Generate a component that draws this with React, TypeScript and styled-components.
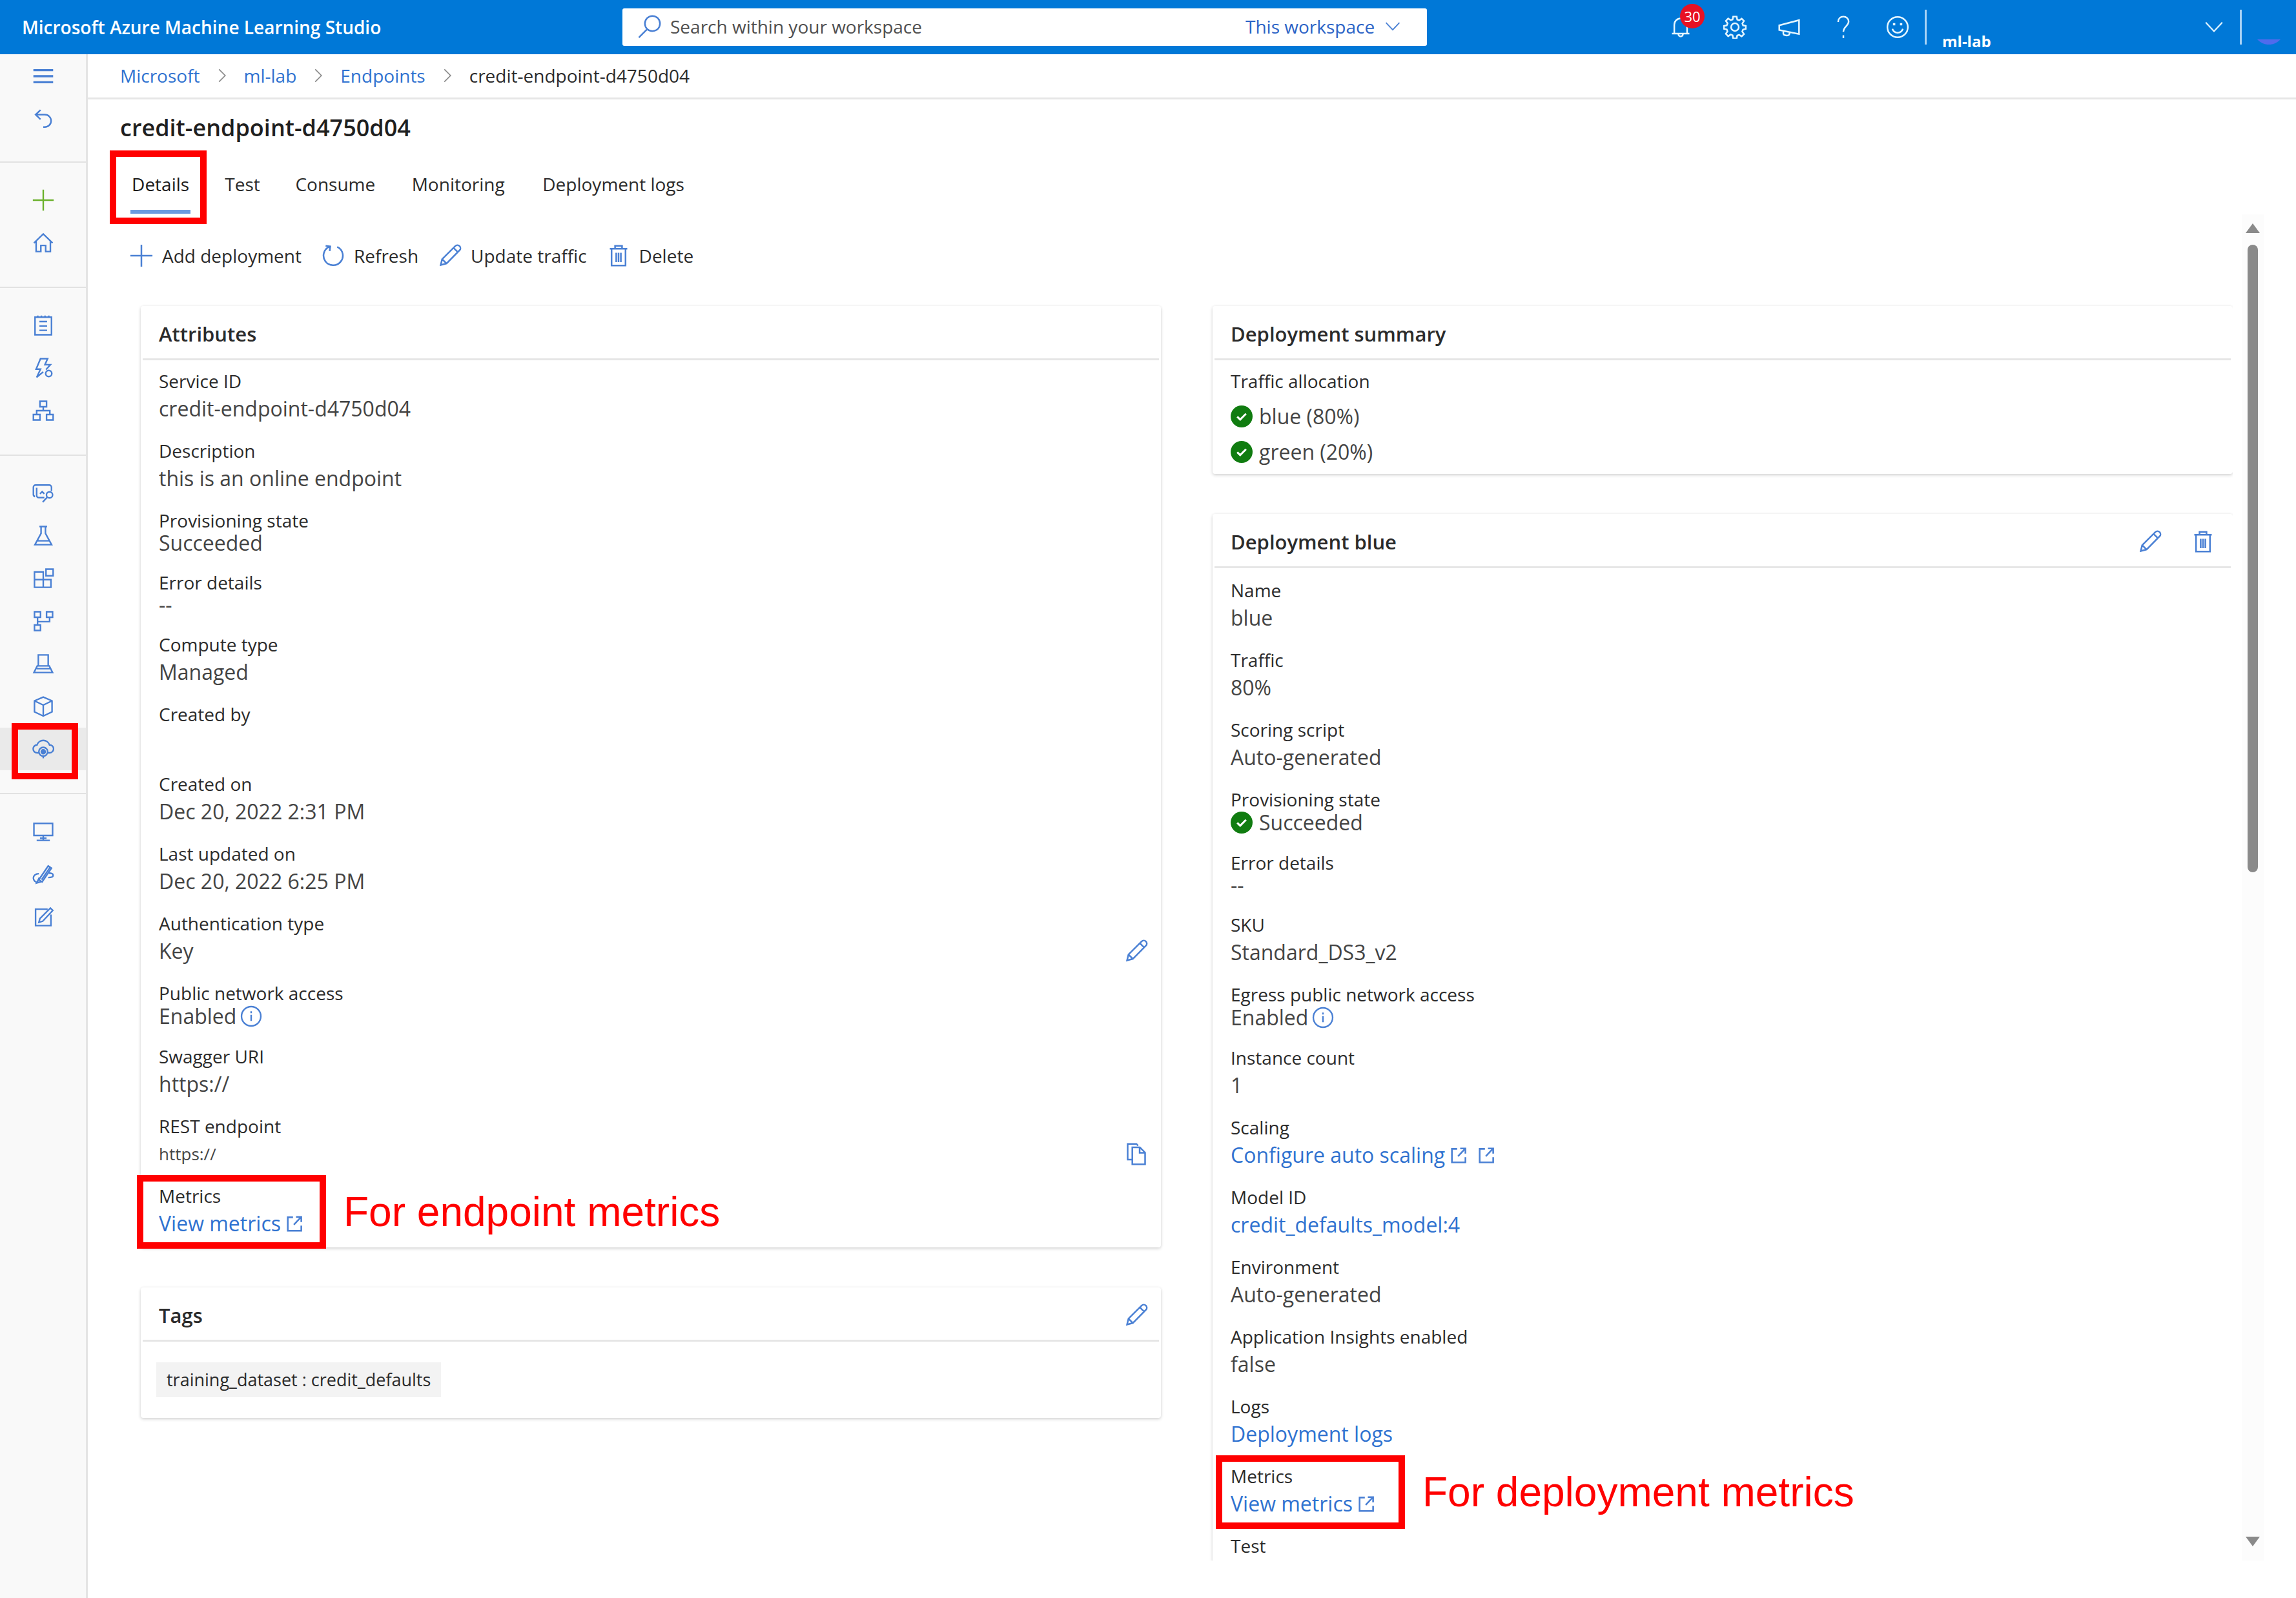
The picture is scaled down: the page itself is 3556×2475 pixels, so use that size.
import React from "react";
import styled, { createGlobalStyle, css } from "styled-components";

const color = {
  brand: "#0078d7",
  link: "#2f72d0",
  icon: "#4a80d4",
  text: "#2b2b2b",
  value: "#444444",
  line: "#e6e6e6",
  mark: "#ff0000",
};

const GlobalStyle = createGlobalStyle`
  *, *::before, *::after { box-sizing: border-box; }
  body {
    margin: 0;
    background: #fff;
    color: ${color.text};
    font-family: "Open Sans", "Noto Sans", sans-serif;
    font-size: 28px;
    line-height: 38px;
  }
  h1, h2, dl, dd, ul, ol, p { margin: 0; padding: 0; }
  ul, ol { list-style: none; }
  button, input, select { font: inherit; color: inherit; }
  button { border: 0; padding: 0; background: none; }
  a { color: ${color.link}; text-decoration: none; }
`;

/* ---------- icons ---------- */

const paths = {
  menu: <path d="M1 4.5h18M1 10h18M1 15.5h18" strokeWidth="2" />,
  back: <path d="M7.5 2 3 6.2l4.5 4.3M3 6.2h8.5a5.6 5.6 0 0 1 0 11.3H10" />,
  plus: <path d="M10 0.5v19M0.5 10h19" />,
  home: <path d="M1.5 10.2 10 2l8.5 8.2M3.5 8.5V18h4.3v-5.6h4.4V18h4.3V8.5" />,
  notebook: <path d="M2.5 2.5h15v16h-15zM5 1v2M8.3 1v2M11.6 1v2M15 1v2M6.5 6.5h7M6.5 10.5h7M6.5 14.5h7" />,
  bolt: (
    <>
      <path d="M12.5 11.5 16.5 7h-5l2.5-5.5H7.5L3.5 11h4L4 18.5l6-5" />
      <circle cx="15" cy="15" r="2.8" />
    </>
  ),
  sitemap: <path d="M7 1.5h6v5H7zM1 13.5h6v5H1zM13 13.5h6v5h-6zM10 6.5V10M4 13.5V10h12v3.5" />,
  data: (
    <>
      <path d="M17.5 8V4.5a2 2 0 0 0-2-2H3a2 2 0 0 0-2 2V11a2 2 0 0 0 1.5 2M11 14H6a2 2 0 0 1-2-2V5M7 10.5l2-2 2 2" />
      <circle cx="15.7" cy="11.5" r="2.8" />
      <path d="M13.6 13.6 9.5 18" />
    </>
  ),
  flask: <path d="M6.5 1.5h7M8 1.5v6.2L2.4 18h15.2L12 7.7V1.5M4.5 14.5h11" />,
  components: <path d="M2 4h8v14H2zM2 11h15v7H10M10 11h7v7h-7zM12.5 1.5H19v6h-6.5z" />,
  pipeline: <path d="M2 1.5h5.500v5H2zM13 1.5h5.500v5H13zM2 13.5h5.500v5H2zM4.8 6.5v7M4.8 10.5h11v-4" />,
  compute: <path d="M5.500 2h9v10h-9zM4 14.5h12M4.500 12h11l3 6h-17z" />,
  cube: <path d="M10 1.5 18 5v10l-8 3.8L2 15V5zM2 5l8 3.8L18 5M10 8.8v10" />,
  cloud: (
    <>
      <path d="M6 13.5H4.500a3.6 3.6 0 0 1-.2-7.2 6 6 0 0 1 11.4 0 3.6 3.6 0 0 1 .2 7.2H14" />
      <circle cx="10" cy="12.5" r="4" />
      <circle cx="10" cy="12.5" r="1.8" fill="currentColor" />
      <path d="M10 16.5v2" />
    </>
  ),
  monitor: <path d="M1.500 2.5h17v11h-17zM10 13.5v4M4 18h12M7 16h6" />,
  linked: (
    <>
      <path d="M6 15 14.5 2.5l3 2L9 17zM8.500 15 16 4M6.500 13 4 18l5-1.500" />
      <path d="M6 9.500c-3 0-5 1.700-5 4s2 4 4.500 4M15 9c2 0 4 .6 4 2s-2 2-4.500 2" />
    </>
  ),
  compose: <path d="M17 8v10H3V3h11M6 15l1-3.500L16.500 2l2.200 2.200L9.500 14z" />,
  refresh: <path d="M7 2.2A8.300 8.300 0 1 0 13.500 2.400M3.500 1.500 7.500 2 7 6" />,
  pencil: <path d="M2 18l1.200-5L14.500 1.700a2.500 2.500 0 0 1 3.700 3.700L7 16.700zM3.200 13 7 16.700M13 3.300 16.800 7" />,
  trash: <path d="M2.500 4h15M7 4V1.500h6V4M4 4v14.500h12V4M8 7.500v8M10 7.500v8M12 7.500v8" />,
  search: (
    <>
      <circle cx="12.500" cy="7.500" r="6.500" />
      <path d="M8 12.300.8 19.500" />
    </>
  ),
  chevronDown: <path d="m2 5.500 8 8.500 8-8.500" />,
  chevronRight: <path d="m6 2 8 8-8 8" />,
  bell: <path d="M2.500 15.500h15M4.500 15.500V8a5.500 5.500 0 0 1 11 0v7.500M8 16a2 2 0 0 0 4 0" />,
  gear: (
    <>
      <path d="M8.500 1h3l.5 2.500 1.600.7 2.200-1.500 2 2-1.400 2.200.6 1.600 2.500.5v2.500l-2.500.6-.7 1.700 1.500 2.200-2 2-2.200-1.400-1.600.6-.5 2.500h-3L8 17l-1.600-.7-2.200 1.500-2-2 1.400-2.200-.6-1.600L.5 11.500V9L3 8.500l.7-1.700-1.500-2.200 2-2L6.400 4 8 3.500z" />
      <circle cx="10" cy="10" r="3.300" />
    </>
  ),
  megaphone: <path d="M18.500 4v12L1.500 12.500v-4zM5 13.300v2.400c0 1.500 4 2 5 .8l.5-2" />,
  help: (
    <>
      <path d="M5.500 5.500C5.500 2.500 7.500 1 10 1s4.500 1.700 4.500 4.200c0 3.800-4.500 4.300-4.500 8.800" />
      <path d="M10 17v2.400" />
    </>
  ),
  smile: (
    <>
      <circle cx="10" cy="10" r="8.800" />
      <path d="M5.500 11.500a4.700 4.700 0 0 0 9 0" />
      <path d="M7 6.500v2M13 6.500v2" strokeWidth="2" />
    </>
  ),
  info: (
    <>
      <circle cx="10" cy="10" r="8.800" />
      <path d="M10 8.700v5.500M10 5.500v1.700" />
    </>
  ),
  external: <path d="M8 2.500H2v15.500h15.500V12M11.500 2h6v6M17.500 2 9 11" strokeWidth="1.900" />,
  copy: <path d="M6 15H2.500V1.500H10L11.500 3M6.500 4.500h6.500l4.500 4.500v10h-11zM12.800 4.500V9.200h4.700" />,
};

type IconName = keyof typeof paths;

const Svg = styled.svg<{ $size: number; $tone: string }>`
  display: block;
  flex: none;
  width: ${(p) => p.$size}px;
  height: ${(p) => p.$size}px;
  color: ${(p) => p.$tone};
  fill: none;
  stroke: currentColor;
`;

const Icon = ({ name, size = 34, tone = color.icon }: { name: IconName; size?: number; tone?: string }) => (
  <Svg viewBox="0 0 20 20" strokeWidth="1.4" $size={size} $tone={tone} aria-hidden="true">
    {paths[name]}
  </Svg>
);

const CheckMark = styled(Svg)`
  margin-right: 4px;
`;

const Check = () => (
  <CheckMark viewBox="0 0 20 20" $size={34} $tone="#107c10" aria-label="Succeeded">
    <circle cx="10" cy="10" r="10" fill="currentColor" stroke="none" />
    <path d="m6 10.200 2.700 2.600L14 7.500" stroke="#fff" strokeWidth="1.800" />
  </CheckMark>
);

/* ---------- shell ---------- */

const App = styled.div`
  display: flex;
  flex-direction: column;
  height: 100vh;
`;

const TopBar = styled.header`
  display: grid;
  grid-template-columns: 964fr 1246fr 1346fr;
  align-items: center;
  flex: none;
  height: 84px;
  background: ${color.brand};
  color: #fff;
`;

const Product = styled.div`
  padding-left: 34px;
  font-weight: 600;
  white-space: nowrap;
`;

const SearchBox = styled.form`
  display: flex;
  align-items: center;
  gap: 14px;
  height: 58px;
  padding: 0 40px 2px 24px;
  border-radius: 3px;
  background: #fff;
  color: #505050;
`;

const SearchInput = styled.input`
  flex: 1;
  min-width: 0;
  padding: 0;
  border: 0;
  outline: 0;
  background: none;
  &::placeholder { color: #505050; opacity: 1; }
`;

const Scope = styled.select`
  appearance: none;
  padding: 0;
  border: 0;
  background: none;
  color: #2b63c6;
`;

const Tools = styled.div`
  display: flex;
  align-items: center;
  justify-content: flex-end;
  height: 100%;
`;

const ToolButton = styled.button`
  position: relative;
  display: grid;
  place-items: center;
  width: 84px;
  height: 80px;
`;

const Count = styled.span`
  position: absolute;
  top: 4px;
  left: 41px;
  width: 38px;
  border-radius: 19px;
  background: #e81123;
  color: #fff;
  font-size: 22px;
  text-align: center;
`;

const Workspace = styled.button`
  display: flex;
  align-items: center;
  justify-content: space-between;
  width: 491px;
  height: 54px;
  padding: 0 24px;
  border: solid #a9d3f5;
  border-width: 0 3px;
`;

const WorkspaceName = styled.span`
  align-self: flex-end;
  font-size: 24px;
  line-height: 10px;
  font-weight: 700;
`;

const Account = styled.button`
  display: flex;
  align-items: flex-end;
  justify-content: center;
  width: 84px;
  height: 54px;
`;

const Columns = styled.div`
  display: flex;
  flex: 1;
  min-height: 0;
`;

const SideNav = styled.nav`
  flex: none;
  width: 136px;
  border-right: 3px solid #e4e4e4;
  background: #f9f9f9;
`;

const NavGroup = styled.ul`
  padding: 25px 0 35px;
  border-bottom: 2px solid #e2e2e2;
  &:first-child { padding: 1px 0 33px; }
  &:last-child { border-bottom: 0; }
`;

const NavItem = styled.li<{ $selected?: boolean }>`
  position: relative;
  background: ${(p) => (p.$selected ? "#eaeaea" : "none")};
`;

const NavButton = styled.button`
  display: grid;
  place-items: center;
  width: 100%;
  height: 66px;
`;

const Main = styled.main`
  display: flex;
  flex: 1;
  flex-direction: column;
  min-width: 0;
  padding-bottom: 58px;
`;

const Crumbs = styled.ol`
  display: flex;
  flex: none;
  align-items: center;
  height: 70px;
  padding: 0 0 2px 50px;
  border-bottom: 3px solid ${color.line};
`;

const Crumb = styled.li`
  display: flex;
  align-items: center;
  &:not(:last-child) svg { margin: 0 22px; }
`;

const Title = styled.h1`
  padding: 20px 0 20px 50px;
  font-size: 36px;
  line-height: 48px;
  font-weight: 600;
  color: #1f1f1f;
`;

const Tabs = styled.div`
  display: flex;
  flex: none;
  gap: 52px;
  height: 90px;
  padding-left: 66px;
`;

const Tab = styled.button<{ $active?: boolean }>`
  position: relative;
  display: grid;
  align-content: center;
  justify-items: center;
  padding-bottom: 4px;
  line-height: 38px;
  &::before {
    content: attr(data-label);
    height: 0;
    overflow: hidden;
    font-weight: 600;
    visibility: hidden;
  }
  ${(p) =>
    p.$active &&
    css`
      color: #1a1a1a;
      &::after {
        content: "";
        position: absolute;
        right: 0;
        bottom: 1px;
        left: 0;
        height: 6px;
        background: #6b9be0;
      }
    `}
`;

const Pane = styled.div`
  display: flex;
  flex: 1;
  gap: 14px;
  min-height: 0;
  padding-right: 50px;
`;

const Scroller = styled.div`
  flex: 1;
  min-width: 0;
  overflow: hidden;
`;

const CommandBar = styled.div`
  display: flex;
  align-items: center;
  gap: 31px;
  height: 128px;
  padding-left: 65px;
`;

const Command = styled.button`
  display: flex;
  align-items: center;
  gap: 14px;
`;

const Board = styled.div`
  display: grid;
  grid-template-columns: 1fr 1fr;
  gap: 80px;
  align-items: start;
  padding: 14px 0 60px 82px;
`;

const Stack = styled.div`
  display: grid;
  gap: 62px;
`;

const ScrollBar = styled.div`
  display: flex;
  flex-direction: column;
  align-items: center;
  width: 34px;
  padding: 14px 0 22px;
  background: #fcfcfc;
`;

const Arrow = styled.span<{ $down?: boolean }>`
  border: solid transparent;
  border-width: ${(p) => (p.$down ? "15px 11px 0" : "0 11px 15px")};
  border-${(p) => (p.$down ? "top" : "bottom")}-color: #8a8a8a;
`;

const Rail = styled.div`
  flex: 1;
  width: 16px;
  margin: 18px 0;
`;

const Thumb = styled.div`
  height: 49%;
  border-radius: 8px;
  background: #8a8a8a;
`;

/* ---------- cards ---------- */

const Card = styled.section`
  border-radius: 4px;
  background: #fff;
  box-shadow: 0 2px 5px rgba(0, 0, 0, 0.16), 0 0 4px rgba(0, 0, 0, 0.05);
`;

const CardHead = styled.div`
  display: flex;
  align-items: center;
  justify-content: space-between;
  height: 84px;
  margin: 0 3px;
  padding: 4px 17px 0 25px;
  border-bottom: 3px solid ${color.line};
`;

const CardTitle = styled.h2`
  font-size: 31px;
  line-height: 42px;
  font-weight: 600;
`;

const Actions = styled.div`
  display: flex;
  gap: 46px;
  padding-right: 8px;
`;

const Fields = styled.dl<{ $top?: number; $bottom?: number }>`
  display: grid;
  gap: 22px;
  padding: ${(p) => p.$top ?? 13}px 20px ${(p) => p.$bottom ?? 13}px 28px;
`;

const FieldBox = styled.div<{ $compact?: boolean }>`
  position: relative;
  padding-bottom: ${(p) => (p.$compact ? 4 : 0)}px;
`;

const Label = styled.dt`
  font-weight: 500;
`;

const Value = styled.dd<{ $compact?: boolean; $small?: boolean }>`
  display: flex;
  align-items: center;
  gap: 6px;
  min-height: ${(p) => (p.$compact ? 32 : 48)}px;
  color: ${color.value};
  font-size: ${(p) => (p.$small ? 26 : 32)}px;
  line-height: ${(p) => (p.$compact ? 32 : 48)}px;
`;

const Push = styled.button`
  margin-left: auto;
`;

const ValueLink = styled.a`
  display: flex;
  align-items: center;
  gap: 8px;
  svg + svg { margin-left: 8px; }
`;

const AllocationList = styled.div`
  padding-top: 8px;
`;

const Allocation = styled.dd`
  display: flex;
  align-items: center;
  gap: 6px;
  height: 55px;
  color: ${color.value};
  font-size: 32px;
`;

const TagArea = styled.div`
  padding: 32px 24px;
`;

const Tag = styled.span`
  display: inline-block;
  padding: 0 16px;
  background: #f3f3f3;
  font-size: 27px;
  line-height: 54px;
`;

/* ---------- red annotations laid over the page ---------- */

const Frame = styled.div<{ $inset: string }>`
  position: absolute;
  inset: ${(p) => p.$inset};
  border: 10px solid ${color.mark};
  pointer-events: none;
`;

const Callout = styled.div<{ $shift: number }>`
  position: absolute;
  top: -13px;
  bottom: -15px;
  left: -${(p) => p.$shift}px;
  display: flex;
  align-items: center;
  gap: 27px;
  color: ${color.mark};
  font-family: "Liberation Sans", Arial, sans-serif;
  font-size: 64px;
  white-space: nowrap;
  pointer-events: none;
  &::before {
    content: "";
    width: 293px;
    height: 100%;
    border: 10px solid ${color.mark};
  }
`;

/* ---------- content ---------- */

type FieldProps = {
  label: string;
  children?: React.ReactNode;
  compact?: boolean;
  small?: boolean;
  callout?: React.ReactNode;
};

const Field = ({ label, children, compact, small, callout }: FieldProps) => (
  <FieldBox $compact={compact}>
    <Label>{label}</Label>
    <Value $compact={compact} $small={small}>
      {children}
    </Value>
    {callout}
  </FieldBox>
);

const MetricsLink = () => (
  <ValueLink href="#metrics">
    View metrics <Icon name="external" size={27} />
  </ValueLink>
);

const navGroups: [IconName, string][][] = [
  [["menu", "Menu"], ["back", "Back"]],
  [["plus", "New"], ["home", "Home"]],
  [["notebook", "Notebooks"], ["bolt", "Automated ML"], ["sitemap", "Designer"]],
  [
    ["data", "Data"],
    ["flask", "Jobs"],
    ["components", "Components"],
    ["pipeline", "Pipelines"],
    ["compute", "Environments"],
    ["cube", "Models"],
    ["cloud", "Endpoints"],
  ],
  [["monitor", "Compute"], ["linked", "Linked services"], ["compose", "Data labeling"]],
];

const toolIcons: [IconName, string][] = [
  ["bell", "Notifications"],
  ["gear", "Settings"],
  ["megaphone", "What's new"],
  ["help", "Help"],
  ["smile", "Feedback"],
];

const crumbs = ["Microsoft", "ml-lab", "Endpoints", "credit-endpoint-d4750d04"];
const tabs = ["Details", "Test", "Consume", "Monitoring", "Deployment logs"];
const commands: [IconName, string][] = [
  ["plus", "Add deployment"],
  ["refresh", "Refresh"],
  ["pencil", "Update traffic"],
  ["trash", "Delete"],
];

export default function EndpointPage() {
  return (
    <App>
      <GlobalStyle />
      <TopBar>
        <Product>Microsoft Azure Machine Learning Studio</Product>
        <SearchBox role="search">
          <Icon name="search" size={36} />
          <SearchInput aria-label="Search" placeholder="Search within your workspace" />
          <Scope aria-label="Search scope">
            <option>This workspace</option>
          </Scope>
          <Icon name="chevronDown" size={26} />
        </SearchBox>
        <Tools>
          {toolIcons.map(([name, label]) => (
            <ToolButton key={name} aria-label={label}>
              <Icon name={name} size={36} tone="#e4f6ff" />
              {name === "bell" && <Count>30</Count>}
            </ToolButton>
          ))}
          <Workspace>
            <WorkspaceName>ml-lab</WorkspaceName>
            <Icon name="chevronDown" size={32} tone="#e4f6ff" />
          </Workspace>
          <Account aria-label="Account">
            <svg width="36" height="8" viewBox="0 0 36 8" aria-hidden="true">
              <path d="M0 0h36A24 24 0 0 1 0 0z" fill="#4f6bed" />
            </svg>
          </Account>
        </Tools>
      </TopBar>
      <Columns>
        <SideNav aria-label="Studio">
          {navGroups.map((group, index) => (
            <NavGroup key={index}>
              {group.map(([name, label]) => (
                <NavItem key={name} $selected={name === "cloud"}>
                  <NavButton aria-label={label}>
                    <Icon name={name} tone={name === "plus" ? "#6bb12c" : color.icon} />
                  </NavButton>
                  {name === "cloud" && <Frame $inset="-7px 12px -14px 18px" />}
                </NavItem>
              ))}
            </NavGroup>
          ))}
        </SideNav>
        <Main>
          <Crumbs aria-label="Breadcrumb">
            {crumbs.map((name, index) => (
              <Crumb key={name}>
                {index < crumbs.length - 1 ? (
                  <>
                    <a href={"#" + name}>{name}</a>
                    <Icon name="chevronRight" size={24} tone="#8a8a8a" />
                  </>
                ) : (
                  name
                )}
              </Crumb>
            ))}
          </Crumbs>
          <Title>credit-endpoint-d4750d04</Title>
          <Tabs role="tablist">
            {tabs.map((name, index) => (
              <Tab key={name} role="tab" aria-selected={index === 0} data-label={name} $active={index === 0}>
                {name}
                {index === 0 && <Frame $inset="-9px -25px -15px -32px" />}
              </Tab>
            ))}
          </Tabs>
          <Pane>
            <Scroller>
              <CommandBar>
                {commands.map(([name, label]) => (
                  <Command key={name}>
                    <Icon name={name} size={36} />
                    {label}
                  </Command>
                ))}
              </CommandBar>
              <Board>
                <Stack>
                  <Card>
                    <CardHead>
                      <CardTitle>Attributes</CardTitle>
                    </CardHead>
                    <Fields>
                      <Field label="Service ID">credit-endpoint-d4750d04</Field>
                      <Field label="Description">this is an online endpoint</Field>
                      <Field label="Provisioning state" compact>Succeeded</Field>
                      <Field label="Error details" compact>--</Field>
                      <Field label="Compute type">Managed</Field>
                      <Field label="Created by" />
                      <Field label="Created on">Dec 20, 2022 2:31 PM</Field>
                      <Field label="Last updated on">Dec 20, 2022 6:25 PM</Field>
                      <Field label="Authentication type">
                        Key
                        <Push aria-label="Edit authentication type">
                          <Icon name="pencil" size={36} />
                        </Push>
                      </Field>
                      <Field label="Public network access" compact>
                        Enabled <Icon name="info" />
                      </Field>
                      <Field label="Swagger URI">https://</Field>
                      <Field label="REST endpoint" small>
                        https://
                        <Push aria-label="Copy REST endpoint">
                          <Icon name="copy" size={36} />
                        </Push>
                      </Field>
                      <Field label="Metrics" callout={<Callout $shift={34}>For endpoint metrics</Callout>}>
                        <MetricsLink />
                      </Field>
                    </Fields>
                  </Card>
                  <Card>
                    <CardHead>
                      <CardTitle>Tags</CardTitle>
                      <button aria-label="Edit tags">
                        <Icon name="pencil" size={36} />
                      </button>
                    </CardHead>
                    <TagArea>
                      <Tag>training_dataset : credit_defaults</Tag>
                    </TagArea>
                  </Card>
                </Stack>
                <Stack>
                  <Card>
                    <CardHead>
                      <CardTitle>Deployment summary</CardTitle>
                    </CardHead>
                    <Fields $bottom={7}>
                      <div>
                        <Label>Traffic allocation</Label>
                        <AllocationList>
                          <Allocation>
                            <Check /> blue (80%)
                          </Allocation>
                          <Allocation>
                            <Check /> green (20%)
                          </Allocation>
                        </AllocationList>
                      </div>
                    </Fields>
                  </Card>
                  <Card>
                    <CardHead>
                      <CardTitle>Deployment blue</CardTitle>
                      <Actions>
                        <button aria-label="Edit deployment">
                          <Icon name="pencil" size={36} />
                        </button>
                        <button aria-label="Delete deployment">
                          <Icon name="trash" size={36} />
                        </button>
                      </Actions>
                    </CardHead>
                    <Fields $top={15}>
                      <Field label="Name">blue</Field>
                      <Field label="Traffic">80%</Field>
                      <Field label="Scoring script">Auto-generated</Field>
                      <Field label="Provisioning state" compact>
                        <Check /> Succeeded
                      </Field>
                      <Field label="Error details" compact>--</Field>
                      <Field label="SKU">Standard_DS3_v2</Field>
                      <Field label="Egress public network access" compact>
                        Enabled <Icon name="info" />
                      </Field>
                      <Field label="Instance count">1</Field>
                      <Field label="Scaling">
                        <ValueLink href="#scaling">
                          Configure auto scaling <Icon name="external" size={27} />
                          <Icon name="external" size={27} />
                        </ValueLink>
                      </Field>
                      <Field label="Model ID">
                        <a href="#model">credit_defaults_model:4</a>
                      </Field>
                      <Field label="Environment">Auto-generated</Field>
                      <Field label="Application Insights enabled">false</Field>
                      <Field label="Logs">
                        <a href="#logs">Deployment logs</a>
                      </Field>
                      <Field label="Metrics" callout={<Callout $shift={23}>For deployment metrics</Callout>}>
                        <MetricsLink />
                      </Field>
                      <Field label="Test" />
                    </Fields>
                  </Card>
                </Stack>
              </Board>
            </Scroller>
            <ScrollBar aria-hidden="true">
              <Arrow />
              <Rail>
                <Thumb />
              </Rail>
              <Arrow $down />
            </ScrollBar>
          </Pane>
        </Main>
      </Columns>
    </App>
  );
}
